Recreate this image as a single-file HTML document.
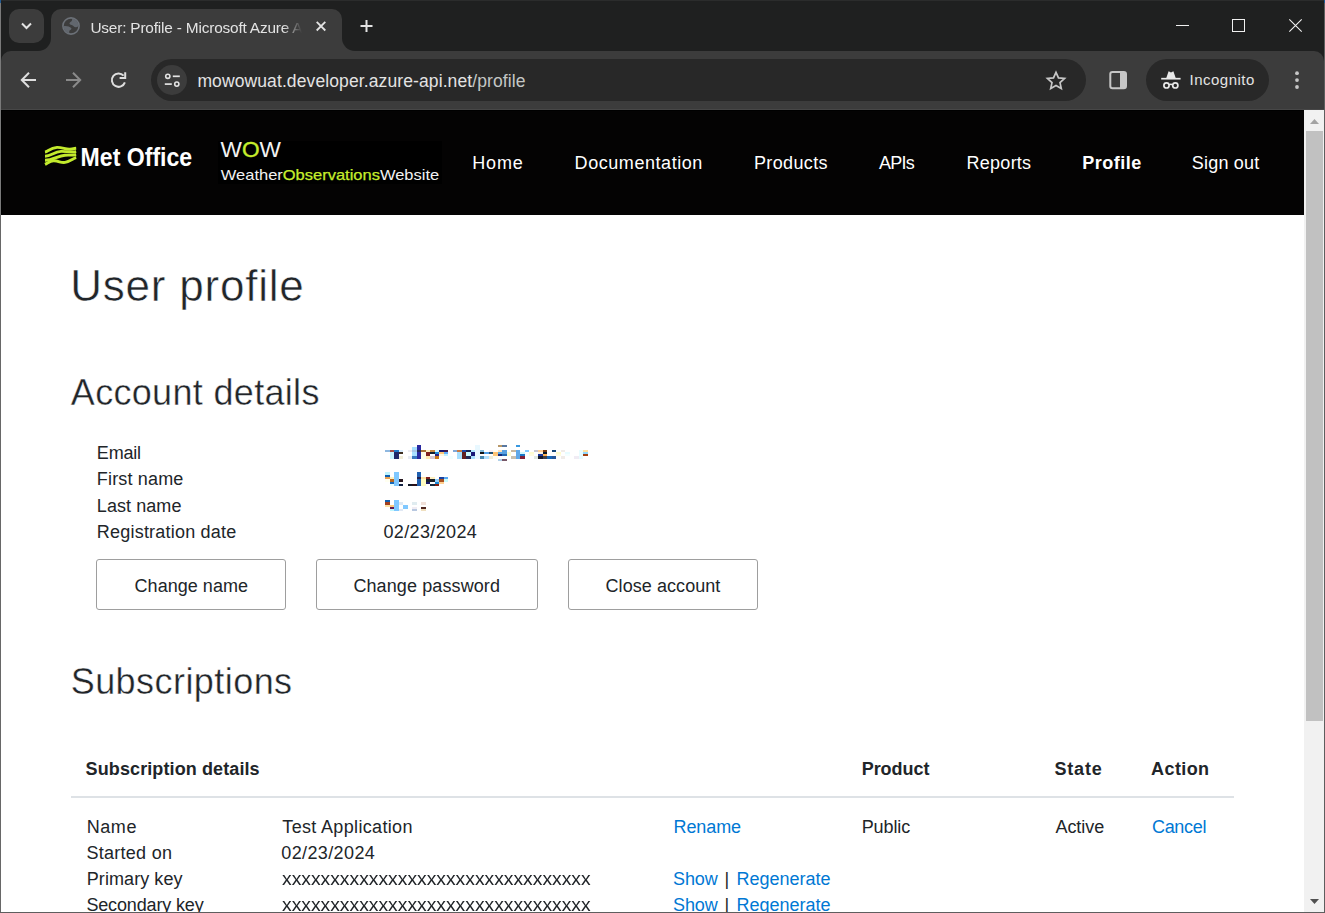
<!DOCTYPE html>
<html lang="en">
<head>
<meta charset="utf-8">
<title>User: Profile - Microsoft Azure API Management - developer portal</title>
<style>
*{box-sizing:border-box;margin:0;padding:0}
html,body{width:1325px;height:913px;overflow:hidden;background:#fff}
body{position:relative;font-family:"Liberation Sans","DejaVu Sans",sans-serif;color:#1c1c28}
.abs{position:absolute}
svg{position:absolute;overflow:visible}
/* ---------- browser chrome ---------- */
#frame{left:0;top:0;width:1325px;height:110px;background:#1f2020}
#topline{left:0;top:0;width:1325px;height:1px;background:#2b2c2c}
#toolbar{left:1px;top:51px;width:1323px;height:59px;background:#3c3c3c;border-radius:10px 10px 0 0}
#tbline{left:1px;top:109px;width:1323px;height:1px;background:#474747}
#tabsearch{left:9px;top:9px;width:35px;height:34px;border-radius:10px;background:#3c3c3c}
#tab{left:51px;top:9px;width:290.5px;height:43px;background:#3c3c3c;border-radius:10px 10px 0 0}
.tabcurve{width:13px;height:13px;top:38px;background:#3c3c3c}
.tabcurve i{display:block;width:13px;height:13px;background:#1f2020}
#tcl{left:38px}#tcl i{border-radius:0 0 13px 0}
#tcr{left:341.5px}#tcr i{border-radius:0 0 0 13px}
#tabtitle{left:91px;top:17px;width:208px;height:20px;font-size:15px;line-height:20px;color:#e3e3e3;white-space:nowrap;overflow:hidden;
 -webkit-mask-image:linear-gradient(90deg,#000 0,#000 180px,transparent 208px);mask-image:linear-gradient(90deg,#000 0,#000 180px,transparent 208px)}
#omni{left:151px;top:59px;width:934.6px;height:42px;border-radius:21px;background:#282828}
#siteinfo{left:157px;top:65px;width:30px;height:30px;border-radius:15px;background:#3c3c3c}
#url{left:198px;top:69px;font-size:17.5px;line-height:22px;color:#e3e3e3;white-space:nowrap}
#url span{color:#c4c7c5}
#incog{left:1146px;top:59px;width:123px;height:42px;border-radius:21px;background:#282828}
#incogtxt{left:1191px;top:69px;font-size:15px;line-height:20px;color:#e3e3e3}
/* ---------- window borders ---------- */
#bl{left:0;top:0;width:1px;height:913px;background:linear-gradient(#7a7a7a 0,#7a7a7a 215px,#676767 215px)}
#br{left:1324px;top:0;width:1px;height:913px;background:#5e5e5e}
#bb{left:0;top:912px;width:1325px;height:1px;background:#5e5e5e}
#blt{left:0;top:0;width:1px;height:3px;background:#1f5a94}
#brt{left:1324px;top:0;width:1px;height:3px;background:#1f5a94}
/* ---------- scrollbar ---------- */
#sbtrack{left:1304px;top:110px;width:20px;height:802px;background:#f1f1f1}
#sbthumb{left:1306px;top:131px;width:17px;height:590px;background:#c1c1c1}
/* ---------- page ---------- */
#hdr{left:1px;top:110px;width:1303px;height:105px;background:#040303;border-top:1px solid #000;border-left:1px solid #000}
#wowbg{left:218px;top:141px;width:224px;height:43px;background:#000}
.nav{top:150px;font-size:17.5px;line-height:24px;color:#fff;white-space:nowrap}
.nav b{font-weight:bold}
.x{position:absolute;white-space:nowrap}
.t{position:absolute;white-space:nowrap;font-size:17.5px;line-height:26px;color:#1c1c28}
.t a{color:#1d6ec4;text-decoration:none}
.btn{position:absolute;top:559px;height:51px;border:1px solid #9e9e9e;border-radius:3px;background:#fff;font-size:17.5px;line-height:49px;text-align:center;color:#1c1c28}
.th{position:absolute;top:755px;font-weight:bold;font-size:17.5px;line-height:26px;white-space:nowrap}
#thline{left:71px;top:796px;width:1163px;height:2px;background:#dee2e6}
</style>
</head>
<body>
<!-- browser chrome -->
<div id="frame" class="abs"></div>
<div id="topline" class="abs"></div>
<div id="toolbar" class="abs"></div>
<div id="tbline" class="abs"></div>
<div id="tab" class="abs"></div>
<div id="tcl" class="abs tabcurve"><i></i></div>
<div id="tcr" class="abs tabcurve"><i></i></div>
<div id="tabsearch" class="abs"></div>
<div id="omni" class="abs"></div>
<div id="siteinfo" class="abs"></div>
<div id="incog" class="abs"></div>

<!-- chrome icons -->
<svg style="left:0;top:0" width="1325" height="110" fill="none" stroke-linecap="butt" stroke-linejoin="miter">
 <!-- tab search chevron -->
 <path d="M22 23.5 L26.5 28 L31 23.5" stroke="#e3e3e3" stroke-width="2"/>
 <!-- globe favicon -->
 <g transform="translate(62,17)">
  <circle cx="9" cy="9" r="8.1" stroke="#6c7178" stroke-width="1.6"/>
  <path d="M10.3 1.6 C13.5 2 16.4 5 16.5 9 C15 10.6 12.6 10.4 11.6 9.3 C10.6 8.1 9 8.3 7.6 7.1 C7 5.9 8.5 5.1 9.5 4.3 C10.3 3.6 9.9 2.6 10.3 1.6Z" fill="#62676e" stroke="none"/>
  <path d="M1.5 9.3 C4 8.6 7.5 9.5 9.4 11.2 C9.8 12.5 8 12.8 7.4 13.8 C7 14.8 7.5 15.6 7.2 16.3 C4 15.7 1.6 13 1.5 9.3Z" fill="#62676e" stroke="none"/>
 </g>
 <!-- tab close -->
 <path d="M316.7 21.9 L325.3 30.5 M325.3 21.9 L316.7 30.5" stroke="#e3e3e3" stroke-width="1.8"/>
 <!-- new tab plus -->
 <path d="M360.5 26 H372.5 M366.5 20 V32" stroke="#e3e3e3" stroke-width="2"/>
 <!-- window controls -->
 <path d="M1176 25.5 H1189" stroke="#f0f0f0" stroke-width="1"/>
 <rect x="1232.5" y="19.5" width="12" height="12" stroke="#f0f0f0" stroke-width="1"/>
 <path d="M1289.3 19.3 L1301.7 31.7 M1301.7 19.3 L1289.3 31.7" stroke="#f0f0f0" stroke-width="1.1"/>
 <!-- back -->
 <path d="M36 80 H23 M29 72.8 L21.8 80 L29 87.2" stroke="#dedede" stroke-width="2"/>
 <!-- forward -->
 <path d="M66 80 H79 M73 72.8 L80.2 80 L73 87.2" stroke="#8a8a8a" stroke-width="2"/>
 <!-- reload -->
 <path d="M123.6 75.7 A6.7 6.7 0 1 0 124.9 82.4" stroke="#dedede" stroke-width="2"/>
 <path d="M125.2 72.2 V78 H119.6" stroke="#dedede" stroke-width="2"/>
 <!-- site info (tune) -->
 <circle cx="167.8" cy="76.3" r="2.1" stroke="#e3e3e3" stroke-width="1.6"/>
 <path d="M172.8 76.3 H179.8" stroke="#e3e3e3" stroke-width="1.7"/>
 <path d="M164.8 84.1 H171.8" stroke="#e3e3e3" stroke-width="1.7"/>
 <circle cx="176.8" cy="84.1" r="2.1" stroke="#e3e3e3" stroke-width="1.6"/>
 <!-- star -->
 <path d="M1056 72.3 L1058.5 77.9 L1064.6 78.5 L1060 82.6 L1061.3 88.6 L1056 85.5 L1050.7 88.6 L1052 82.6 L1047.4 78.5 L1053.5 77.9 Z" stroke="#c7c7c7" stroke-width="1.7" stroke-linejoin="miter"/>
 <!-- side panel -->
 <rect x="1110.3" y="71.9" width="15.7" height="16.3" rx="2.2" stroke="#c7c7c7" stroke-width="2"/>
 <rect x="1120" y="72" width="6" height="16" fill="#c7c7c7"/>
 <!-- incognito icon -->
 <path d="M1166.3 78 L1168.6 71.2 L1171 72.4 L1173.4 71.2 L1175.7 78 Z" fill="#e8e8e8"/>
 <path d="M1161.2 78.7 H1180.6" stroke="#e8e8e8" stroke-width="1.7"/>
 <circle cx="1166.5" cy="85.4" r="2.6" stroke="#e8e8e8" stroke-width="1.7"/>
 <circle cx="1175.3" cy="85.4" r="2.6" stroke="#e8e8e8" stroke-width="1.7"/>
 <path d="M1169 84.8 Q1170.9 83.8 1172.8 84.8" stroke="#e8e8e8" stroke-width="1.5"/>
 <!-- menu dots -->
 <circle cx="1297" cy="73.2" r="1.9" fill="#c7c7c7"/><circle cx="1297" cy="80.1" r="1.9" fill="#c7c7c7"/><circle cx="1297" cy="87" r="1.9" fill="#c7c7c7"/>
</svg>

<!-- page -->
<div id="hdr" class="abs"></div>
<div id="wowbg" class="abs"></div>
<div class="btn" style="left:96px;width:190px"></div>
<div class="btn" style="left:316px;width:222px"></div>
<div class="btn" style="left:568px;width:190px"></div>
<div id="thline" class="abs"></div>
<!-- Met Office logo -->
<svg style="left:0;top:110px" width="460" height="105" viewBox="0 110 460 105">
 <g fill="none" stroke="#c2ea2c" stroke-width="2.9" stroke-linecap="butt">
  <path d="M45 152 C48 151.5 50 148 57 147.4 C62 147.2 66 149.6 70 149.2 C73 149 75 148.3 76.2 148.2"/>
  <path d="M45 156.2 C51 156 54 152 61 151.4 C66 151.2 70 152.6 76.2 151.6"/>
  <path d="M45 160.2 C53 160.2 58 155.6 65 155.2 C69 155 72 155.4 76.2 154.8"/>
  <path d="M45 164.4 C48 163 50 160.6 54 160.8 C59 161 61 163 65 162.4 C70 161.6 73 158.4 76.2 157.6"/>
 </g>
 <text x="80.6" y="165.8" font-family="'Liberation Sans',sans-serif" font-weight="bold" font-size="26.5" fill="#fff" textLength="111.6" lengthAdjust="spacingAndGlyphs">Met Office</text>
 <text x="220.6" y="156.6" font-family="'Liberation Sans',sans-serif" font-size="21.6" fill="#f2f2f2" textLength="60.4" lengthAdjust="spacingAndGlyphs">W<tspan fill="#c6ee2c" stroke="#c6ee2c" stroke-width="0.35">O</tspan>W</text>
 <text x="220.8" y="179.8" font-family="'Liberation Sans',sans-serif" font-size="15" fill="#f2f2f2" textLength="218.4" lengthAdjust="spacingAndGlyphs">Weather<tspan fill="#c6ee2c" stroke="#c6ee2c" stroke-width="0.25">Observations</tspan>Website</text>
</svg>

<svg style="left:0;top:0" width="1304" height="913" shape-rendering="crispEdges"><rect x="417" y="445" width="4" height="2" fill="#2828a0"/><rect x="475" y="445" width="5" height="2" fill="#e8f8ff"/><rect x="498" y="445" width="4" height="2" fill="#b89868"/><rect x="502" y="445" width="5" height="2" fill="#5878a0"/><rect x="516" y="445" width="4" height="2" fill="#3898e0"/><rect x="412" y="447" width="5" height="3" fill="#a8e0ff"/><rect x="417" y="447" width="4" height="3" fill="#2828a0"/><rect x="475" y="447" width="5" height="3" fill="#e8f8ff"/><rect x="385" y="450" width="5" height="2" fill="#8fb8e0"/><rect x="390" y="450" width="4" height="2" fill="#a85048"/><rect x="394" y="450" width="5" height="2" fill="#1e78c8"/><rect x="399" y="450" width="4" height="2" fill="#dceeff"/><rect x="408" y="450" width="4" height="2" fill="#ececf2"/><rect x="412" y="450" width="5" height="2" fill="#a8c8e8"/><rect x="417" y="450" width="4" height="2" fill="#242858"/><rect x="421" y="450" width="5" height="2" fill="#a87038"/><rect x="426" y="450" width="4" height="2" fill="#fff0c0"/><rect x="430" y="450" width="5" height="2" fill="#c88840"/><rect x="435" y="450" width="4" height="2" fill="#d0f8ff"/><rect x="439" y="450" width="5" height="2" fill="#181870"/><rect x="444" y="450" width="4" height="2" fill="#401848"/><rect x="453" y="450" width="4" height="2" fill="#80a8d8"/><rect x="457" y="450" width="5" height="2" fill="#c87840"/><rect x="462" y="450" width="4" height="2" fill="#1848a8"/><rect x="466" y="450" width="5" height="2" fill="#182050"/><rect x="471" y="450" width="4" height="2" fill="#b0e8ff"/><rect x="475" y="450" width="5" height="2" fill="#e8f8ff"/><rect x="480" y="450" width="4" height="2" fill="#80b8d8"/><rect x="489" y="450" width="4" height="2" fill="#f8f0f8"/><rect x="493" y="450" width="5" height="2" fill="#fffcf0"/><rect x="498" y="450" width="4" height="2" fill="#ffe0b8"/><rect x="502" y="450" width="5" height="2" fill="#58a0e0"/><rect x="511" y="450" width="5" height="2" fill="#c8b8a0"/><rect x="516" y="450" width="4" height="2" fill="#60a8e8"/><rect x="525" y="450" width="4" height="2" fill="#80c8ff"/><rect x="534" y="450" width="4" height="2" fill="#c8c8d0"/><rect x="538" y="450" width="5" height="2" fill="#ffd098"/><rect x="543" y="450" width="4" height="2" fill="#703810"/><rect x="552" y="450" width="4" height="2" fill="#184878"/><rect x="561" y="450" width="4" height="2" fill="#f0ece8"/><rect x="579" y="450" width="4" height="2" fill="#e8fcff"/><rect x="583" y="450" width="5" height="2" fill="#ffe0a0"/><rect x="390" y="452" width="4" height="2" fill="#c8f4ff"/><rect x="394" y="452" width="5" height="2" fill="#202868"/><rect x="399" y="452" width="4" height="2" fill="#403020"/><rect x="412" y="452" width="5" height="2" fill="#a8e0ff"/><rect x="417" y="452" width="4" height="2" fill="#2828a0"/><rect x="421" y="452" width="5" height="2" fill="#fffbe8"/><rect x="426" y="452" width="4" height="2" fill="#802020"/><rect x="430" y="452" width="5" height="2" fill="#102030"/><rect x="435" y="452" width="4" height="2" fill="#1888d8"/><rect x="439" y="452" width="5" height="2" fill="#ffc878"/><rect x="444" y="452" width="4" height="2" fill="#60b0ff"/><rect x="457" y="452" width="5" height="2" fill="#a8e0ff"/><rect x="462" y="452" width="4" height="2" fill="#602020"/><rect x="466" y="452" width="5" height="2" fill="#c8f8ff"/><rect x="471" y="452" width="4" height="2" fill="#181878"/><rect x="475" y="452" width="5" height="2" fill="#e8f8ff"/><rect x="480" y="452" width="4" height="2" fill="#101010"/><rect x="484" y="452" width="5" height="2" fill="#50a0e8"/><rect x="489" y="452" width="4" height="2" fill="#205070"/><rect x="493" y="452" width="5" height="2" fill="#ffc070"/><rect x="498" y="452" width="4" height="2" fill="#58a8e8"/><rect x="502" y="452" width="5" height="2" fill="#58a0e0"/><rect x="507" y="452" width="4" height="2" fill="#fffcd0"/><rect x="516" y="452" width="4" height="2" fill="#60a8e8"/><rect x="520" y="452" width="5" height="2" fill="#d0f8ff"/><rect x="529" y="452" width="5" height="2" fill="#fffcd0"/><rect x="538" y="452" width="5" height="2" fill="#fff4e0"/><rect x="543" y="452" width="4" height="2" fill="#081828"/><rect x="556" y="452" width="5" height="2" fill="#fffcc8"/><rect x="565" y="452" width="5" height="2" fill="#e8fcff"/><rect x="579" y="452" width="4" height="2" fill="#e8fcff"/><rect x="583" y="452" width="5" height="2" fill="#90d8ff"/><rect x="390" y="454" width="4" height="2" fill="#c8f4ff"/><rect x="394" y="454" width="5" height="2" fill="#202868"/><rect x="412" y="454" width="5" height="2" fill="#a8e0ff"/><rect x="417" y="454" width="4" height="2" fill="#2828a0"/><rect x="421" y="454" width="5" height="2" fill="#fffbe8"/><rect x="426" y="454" width="4" height="2" fill="#802020"/><rect x="435" y="454" width="4" height="2" fill="#302080"/><rect x="439" y="454" width="5" height="2" fill="#fff8e0"/><rect x="444" y="454" width="4" height="2" fill="#c0f0ff"/><rect x="457" y="454" width="5" height="2" fill="#a8e0ff"/><rect x="462" y="454" width="4" height="2" fill="#602020"/><rect x="466" y="454" width="5" height="2" fill="#c8f8ff"/><rect x="471" y="454" width="4" height="2" fill="#181878"/><rect x="475" y="454" width="5" height="2" fill="#e8f8ff"/><rect x="493" y="454" width="5" height="2" fill="#ffc878"/><rect x="498" y="454" width="4" height="2" fill="#182878"/><rect x="502" y="454" width="5" height="2" fill="#2068b0"/><rect x="507" y="454" width="4" height="2" fill="#fffcd0"/><rect x="516" y="454" width="4" height="2" fill="#60a8e8"/><rect x="520" y="454" width="5" height="2" fill="#1878c8"/><rect x="529" y="454" width="5" height="2" fill="#fffce0"/><rect x="538" y="454" width="5" height="2" fill="#1838a0"/><rect x="543" y="454" width="4" height="2" fill="#ffb050"/><rect x="556" y="454" width="5" height="2" fill="#fffce0"/><rect x="565" y="454" width="5" height="2" fill="#f4ffff"/><rect x="579" y="454" width="4" height="2" fill="#e8fcff"/><rect x="583" y="454" width="5" height="2" fill="#a04010"/><rect x="390" y="456" width="4" height="3" fill="#c8f4ff"/><rect x="394" y="456" width="5" height="3" fill="#202868"/><rect x="399" y="456" width="4" height="3" fill="#f0ecd8"/><rect x="408" y="456" width="4" height="3" fill="#e8ecf4"/><rect x="412" y="456" width="5" height="3" fill="#3878c0"/><rect x="417" y="456" width="4" height="3" fill="#2828a0"/><rect x="421" y="456" width="5" height="3" fill="#fffbe8"/><rect x="426" y="456" width="4" height="3" fill="#ffe8b0"/><rect x="430" y="456" width="5" height="3" fill="#d8c8d0"/><rect x="435" y="456" width="4" height="3" fill="#c87818"/><rect x="448" y="456" width="5" height="3" fill="#f0ffff"/><rect x="457" y="456" width="5" height="3" fill="#a8e0ff"/><rect x="462" y="456" width="4" height="3" fill="#602020"/><rect x="466" y="456" width="5" height="3" fill="#202858"/><rect x="471" y="456" width="4" height="3" fill="#a8e0ff"/><rect x="475" y="456" width="5" height="3" fill="#e8f8ff"/><rect x="480" y="456" width="4" height="3" fill="#4888b0"/><rect x="484" y="456" width="5" height="3" fill="#b0e0ff"/><rect x="489" y="456" width="4" height="3" fill="#f0ecd8"/><rect x="493" y="456" width="5" height="3" fill="#fffcf0"/><rect x="511" y="456" width="5" height="3" fill="#c8c0b0"/><rect x="516" y="456" width="4" height="3" fill="#60a8e8"/><rect x="520" y="456" width="5" height="3" fill="#802038"/><rect x="534" y="456" width="4" height="3" fill="#e0e8e0"/><rect x="538" y="456" width="5" height="3" fill="#181828"/><rect x="543" y="456" width="4" height="3" fill="#404048"/><rect x="547" y="456" width="5" height="3" fill="#1868b8"/><rect x="552" y="456" width="4" height="3" fill="#285898"/><rect x="561" y="456" width="4" height="3" fill="#f0ece8"/><rect x="574" y="456" width="5" height="3" fill="#f0ecf4"/><rect x="579" y="456" width="4" height="3" fill="#e8fcff"/><rect x="498" y="459" width="4" height="2" fill="#b0d0e8"/><rect x="502" y="459" width="5" height="2" fill="#785868"/><rect x="385" y="472" width="5" height="3" fill="#c0f4ff"/><rect x="394" y="472" width="5" height="3" fill="#80c8ff"/><rect x="417" y="472" width="4" height="3" fill="#2060b0"/><rect x="385" y="475" width="5" height="2" fill="#1060b0"/><rect x="394" y="475" width="5" height="2" fill="#80c8ff"/><rect x="417" y="475" width="4" height="2" fill="#2060b0"/><rect x="385" y="477" width="5" height="2" fill="#e8a050"/><rect x="390" y="477" width="4" height="2" fill="#fff0c0"/><rect x="394" y="477" width="5" height="2" fill="#80c8ff"/><rect x="417" y="477" width="4" height="2" fill="#202050"/><rect x="421" y="477" width="5" height="2" fill="#ffe0a0"/><rect x="426" y="477" width="4" height="2" fill="#802020"/><rect x="430" y="477" width="5" height="2" fill="#fff0c0"/><rect x="439" y="477" width="5" height="2" fill="#1840a0"/><rect x="444" y="477" width="4" height="2" fill="#58a8f0"/><rect x="385" y="479" width="5" height="3" fill="#fffff0"/><rect x="390" y="479" width="4" height="3" fill="#b86820"/><rect x="394" y="479" width="5" height="3" fill="#80c8ff"/><rect x="399" y="479" width="4" height="3" fill="#281820"/><rect x="417" y="479" width="4" height="3" fill="#2060b0"/><rect x="421" y="479" width="5" height="3" fill="#fffcc0"/><rect x="426" y="479" width="4" height="3" fill="#182028"/><rect x="430" y="479" width="5" height="3" fill="#182028"/><rect x="435" y="479" width="4" height="3" fill="#90d0ff"/><rect x="439" y="479" width="5" height="3" fill="#a85020"/><rect x="444" y="479" width="4" height="3" fill="#c8fcff"/><rect x="390" y="482" width="4" height="2" fill="#1868b8"/><rect x="394" y="482" width="5" height="2" fill="#80c8ff"/><rect x="417" y="482" width="4" height="2" fill="#2060b0"/><rect x="421" y="482" width="5" height="2" fill="#fffcc0"/><rect x="426" y="482" width="4" height="2" fill="#181868"/><rect x="435" y="482" width="4" height="2" fill="#1888d8"/><rect x="439" y="482" width="5" height="2" fill="#ffd090"/><rect x="390" y="484" width="4" height="2" fill="#e8ffff"/><rect x="394" y="484" width="5" height="2" fill="#80c8ff"/><rect x="399" y="484" width="4" height="2" fill="#102040"/><rect x="408" y="484" width="4" height="2" fill="#101828"/><rect x="412" y="484" width="5" height="2" fill="#281018"/><rect x="417" y="484" width="4" height="2" fill="#2060b0"/><rect x="421" y="484" width="5" height="2" fill="#fffcc0"/><rect x="430" y="484" width="5" height="2" fill="#102840"/><rect x="435" y="484" width="4" height="2" fill="#802010"/><rect x="385" y="500" width="5" height="2" fill="#1060b0"/><rect x="394" y="500" width="5" height="2" fill="#80c8ff"/><rect x="385" y="502" width="5" height="3" fill="#a04020"/><rect x="394" y="502" width="5" height="3" fill="#80c8ff"/><rect x="399" y="502" width="4" height="3" fill="#dce8f4"/><rect x="412" y="502" width="5" height="3" fill="#e0ecf0"/><rect x="421" y="502" width="5" height="3" fill="#f0e0d8"/><rect x="385" y="505" width="5" height="2" fill="#ffe0a0"/><rect x="390" y="505" width="4" height="2" fill="#ffc878"/><rect x="394" y="505" width="5" height="2" fill="#80c8ff"/><rect x="403" y="505" width="5" height="2" fill="#80c8ff"/><rect x="390" y="507" width="4" height="2" fill="#601850"/><rect x="394" y="507" width="5" height="2" fill="#80c8ff"/><rect x="403" y="507" width="5" height="2" fill="#80c8ff"/><rect x="412" y="507" width="5" height="2" fill="#f0ecf4"/><rect x="421" y="507" width="5" height="2" fill="#502820"/><rect x="390" y="509" width="4" height="2" fill="#c0f8ff"/><rect x="394" y="509" width="5" height="2" fill="#80c8ff"/><rect x="399" y="509" width="4" height="2" fill="#e0e8f4"/><rect x="412" y="509" width="5" height="2" fill="#b8c8e0"/><rect x="421" y="509" width="5" height="2" fill="#f0e0c0"/></svg>
<a class="x" style="left:472.3px;top:150px;font-size:18px;line-height:26px;color:#fff;letter-spacing:0.8px">Home</a>
<a class="x" style="left:574.6px;top:150px;font-size:18px;line-height:26px;color:#fff;letter-spacing:0.558px">Documentation</a>
<a class="x" style="left:754px;top:150px;font-size:18px;line-height:26px;color:#fff;letter-spacing:0.357px">Products</a>
<a class="x" style="left:879.1px;top:150px;font-size:18px;line-height:26px;color:#fff;letter-spacing:-0.767px">APIs</a>
<a class="x" style="left:966.6px;top:150px;font-size:18px;line-height:26px;color:#fff;letter-spacing:0.25px">Reports</a>
<a class="x" style="left:1082.3px;top:150px;font-size:18px;line-height:26px;color:#fff;letter-spacing:0.483px;font-weight:bold">Profile</a>
<a class="x" style="left:1191.8px;top:150px;font-size:18px;line-height:26px;color:#fff;letter-spacing:0.2px">Sign out</a>
<h1 class="x" style="left:70.3px;top:255px;font-size:44px;line-height:62px;color:#212529;letter-spacing:0.773px;-webkit-text-stroke:0.5px #fff;font-weight:normal">User profile</h1>
<h2 class="x" style="left:70.8px;top:368px;font-size:36px;line-height:50px;color:#212529;letter-spacing:0.321px;-webkit-text-stroke:0.4px #fff;font-weight:normal">Account details</h2>
<h2 class="x" style="left:70.7px;top:657px;font-size:36px;line-height:50px;color:#212529;letter-spacing:0.442px;-webkit-text-stroke:0.4px #fff;font-weight:normal">Subscriptions</h2>
<div class="x" style="left:96.8px;top:440px;font-size:18px;line-height:26px;color:#212529;letter-spacing:-0.175px">Email</div>
<div class="x" style="left:96.8px;top:466px;font-size:18px;line-height:26px;color:#212529;letter-spacing:0.167px">First name</div>
<div class="x" style="left:96.8px;top:493px;font-size:18px;line-height:26px;color:#212529;letter-spacing:0.075px">Last name</div>
<div class="x" style="left:96.8px;top:519px;font-size:18px;line-height:26px;color:#212529;letter-spacing:0.212px">Registration date</div>
<div class="x" style="left:383.4px;top:519px;font-size:18px;line-height:26px;color:#212529;letter-spacing:0.367px">02/23/2024</div>
<div class="x" style="left:134.6px;top:573px;font-size:18px;line-height:26px;color:#212529;letter-spacing:0.03px">Change name</div>
<div class="x" style="left:353.4px;top:573px;font-size:18px;line-height:26px;color:#212529;letter-spacing:0.107px">Change password</div>
<div class="x" style="left:605.5px;top:573px;font-size:18px;line-height:26px;color:#212529;letter-spacing:0.067px">Close account</div>
<div class="x" style="left:85.6px;top:756px;font-size:18px;line-height:26px;color:#212529;letter-spacing:0.105px;font-weight:bold">Subscription details</div>
<div class="x" style="left:861.7px;top:756px;font-size:18px;line-height:26px;color:#212529;letter-spacing:-0.05px;font-weight:bold">Product</div>
<div class="x" style="left:1054.4px;top:756px;font-size:18px;line-height:26px;color:#212529;letter-spacing:0.85px;font-weight:bold">State</div>
<div class="x" style="left:1151.1px;top:756px;font-size:18px;line-height:26px;color:#212529;letter-spacing:0.4px;font-weight:bold">Action</div>
<div class="x" style="left:86.8px;top:814px;font-size:18px;line-height:26px;color:#212529;letter-spacing:0.533px">Name</div>
<div class="x" style="left:86.4px;top:840px;font-size:18px;line-height:26px;color:#212529;letter-spacing:0.278px">Started on</div>
<div class="x" style="left:86.8px;top:866px;font-size:18px;line-height:26px;color:#212529;letter-spacing:0.07px">Primary key</div>
<div class="x" style="left:86.4px;top:892px;font-size:18px;line-height:26px;color:#212529;letter-spacing:-0.15px">Secondary key</div>
<div class="x" style="left:282.3px;top:814px;font-size:18px;line-height:26px;color:#212529;letter-spacing:0.34px">Test Application</div>
<div class="x" style="left:281.3px;top:840px;font-size:18px;line-height:26px;color:#212529;letter-spacing:0.378px">02/23/2024</div>
<div class="x" style="left:282.18px;top:866px;font-size:19px;line-height:26px;color:#212529;letter-spacing:0px;transform:scaleX(1.0152);transform-origin:0 0">xxxxxxxxxxxxxxxxxxxxxxxxxxxxxxxx</div>
<div class="x" style="left:282.18px;top:892px;font-size:19px;line-height:26px;color:#212529;letter-spacing:0px;transform:scaleX(1.0152);transform-origin:0 0">xxxxxxxxxxxxxxxxxxxxxxxxxxxxxxxx</div>
<a class="x" style="left:673.6px;top:814px;font-size:18px;line-height:26px;color:#0078d4;letter-spacing:-0.12px">Rename</a>
<a class="x" style="left:673.1px;top:866px;font-size:18px;line-height:26px;color:#0078d4;letter-spacing:-0.133px">Show</a>
<div class="x" style="left:724.6px;top:866px;font-size:18px;line-height:26px;color:#212529;letter-spacing:0px">|</div>
<a class="x" style="left:736.5px;top:866px;font-size:18px;line-height:26px;color:#0078d4;letter-spacing:-0.011px">Regenerate</a>
<a class="x" style="left:673.1px;top:892px;font-size:18px;line-height:26px;color:#0078d4;letter-spacing:-0.133px">Show</a>
<div class="x" style="left:724.6px;top:892px;font-size:18px;line-height:26px;color:#212529;letter-spacing:0px">|</div>
<a class="x" style="left:736.5px;top:892px;font-size:18px;line-height:26px;color:#0078d4;letter-spacing:-0.011px">Regenerate</a>
<div class="x" style="left:861.7px;top:814px;font-size:18px;line-height:26px;color:#212529;letter-spacing:-0.1px">Public</div>
<div class="x" style="left:1055.4px;top:814px;font-size:18px;line-height:26px;color:#212529;letter-spacing:-0.02px">Active</div>
<a class="x" style="left:1152px;top:814px;font-size:18px;line-height:26px;color:#0078d4;letter-spacing:-0.32px">Cancel</a>
<div class="x" style="left:1189.5px;top:70px;font-size:15px;line-height:20px;color:#e3e3e3;letter-spacing:0.5px">Incognito</div>
<div class="x" style="left:197.4px;top:69px;font-size:17.5px;line-height:24px;color:#e3e3e3;letter-spacing:0.108px">mowowuat.developer.azure-api.net<span style="color:#c4c7c5">/profile</span></div>
<div class="x" style="left:90.4px;top:17px;font-size:15.4px;line-height:22px;color:#e3e3e3;letter-spacing:-0.183px;width:213px;overflow:hidden;-webkit-mask-image:linear-gradient(90deg,#000 0,#000 193px,transparent 212px);mask-image:linear-gradient(90deg,#000 0,#000 193px,transparent 212px)">User: Profile - Microsoft Azure API Management - developer portal</div>

<!-- scrollbar -->
<div id="sbtrack" class="abs"></div>
<div id="sbthumb" class="abs"></div>
<svg style="left:1304px;top:110px" width="20" height="21"><polygon points="6,14 15,14 10.5,9" fill="#a3a3a3"/></svg>
<svg style="left:1304px;top:891px" width="20" height="21"><polygon points="6,8 15,8 10.5,13" fill="#505050"/></svg>

<!-- window borders -->
<div id="bl" class="abs"></div><div id="br" class="abs"></div><div id="bb" class="abs"></div>
<div id="blt" class="abs"></div><div id="brt" class="abs"></div>
</body>
</html>
